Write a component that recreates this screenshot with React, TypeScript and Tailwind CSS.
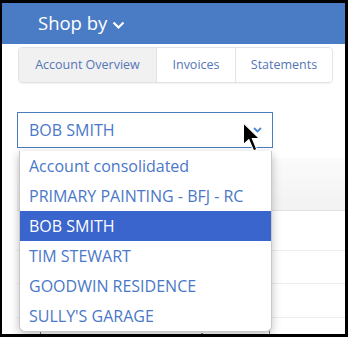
import { useState } from 'react';

const accounts = [
  'Account consolidated',
  'PRIMARY PAINTING - BFJ - RC',
  'BOB SMITH',
  'TIM STEWART',
  'GOODWIN RESIDENCE',
  "SULLY'S GARAGE",
];

const tabs = ['Account Overview', 'Invoices', 'Statements'];

export default function App() {
  const [selected, setSelected] = useState('BOB SMITH');
  const [activeTab, setActiveTab] = useState(0);

  return (
    <div className="w-[348px] h-[337px] bg-black pt-[3px] pl-[2px] pr-[3px] pb-[3px] font-['Open_Sans',sans-serif]">
      <div className="relative w-full h-full bg-white overflow-hidden">
        {/* Header bar */}
        <div className="h-[41px] bg-[#4a7cc6] flex items-center pl-[36px]">
          <span className="text-white text-[18.5px] leading-none">Shop by</span>
          <svg width="13" height="9" viewBox="0 0 13 9" className="ml-[5px] mt-[3px]">
            <path d="M1.5 1.5 L6.5 6.5 L11.5 1.5" fill="none" stroke="white" strokeWidth="2.2" />
          </svg>
        </div>

        {/* Tabs */}
        <div className="mt-[3px] ml-[16px] w-[315px] h-[36px] flex border border-[#e3e3e3] rounded-[4px] overflow-hidden shadow-[0_1px_1px_rgba(0,0,0,0.05)]">
          {tabs.map((t, i) => (
            <button
              key={t}
              onClick={() => setActiveTab(i)}
              className={`h-full flex items-center justify-center text-[12.5px] text-[#5476b6] ${
                i === 0 ? 'w-[137px]' : i === 1 ? 'w-[79px] border-l border-[#e3e3e3]' : 'flex-1 border-l border-[#e3e3e3]'
              } ${i === activeTab ? 'bg-[#f1f1f1]' : 'bg-white'}`}
            >
              {t}
            </button>
          ))}
        </div>

        {/* Account select */}
        <div className="mt-[29px] ml-[15px] w-[256px] h-[36px] border border-[#4a7cc0] flex items-center justify-between pl-[11px] pr-[10px]">
          <span className="text-[16px] text-[#4a78c8]">{selected}</span>
          <svg width="9" height="6" viewBox="0 0 9 6">
            <path d="M1 1 L4.5 4.5 L8 1" fill="none" stroke="#4a86d8" strokeWidth="1.8" />
          </svg>
        </div>

        {/* Content behind dropdown */}
        <div className="mt-[10px] ml-[15px]">
          <div className="h-[53px] bg-gradient-to-b from-[#fbfbfb] to-[#f2f2f2] border-b border-[#e2e2e2]" />
          <div className="h-[40px] border-b border-[#ececec]" />
          <div className="h-[33px] border-b border-[#ececec]" />
          <div className="h-[34px] border-b border-[#ececec]" />
          <div className="mt-[10px] ml-[23px] w-[230px] border border-[#777] px-[4px] text-[14px] leading-[20px] text-[#333]">
            Last payment processed
          </div>
        </div>

        {/* Dropdown menu */}
        <div className="absolute left-[17px] top-[148px] w-[253px] bg-white rounded-b-[6px] border border-t-0 border-[#c8c8c8] shadow-[0_3px_10px_rgba(0,0,0,0.25)] overflow-hidden">
          {accounts.map((a) => (
            <div
              key={a}
              onClick={() => setSelected(a)}
              className={`h-[30px] flex items-center pl-[9px] text-[16px] ${
                a === selected ? 'bg-[#3a65cd] text-white' : 'text-[#4a78c8]'
              }`}
            >
              {a}
            </div>
          ))}
        </div>

        {/* Mouse pointer */}
        <svg
          width="20"
          height="32"
          viewBox="0 0 18 30"
          className="absolute left-[240px] top-[119px]"
        >
          <path
            d="M1 1 L1 21 L6 16.5 L10.5 27 L13.5 25.8 L9.3 15.5 L16 15.5 Z"
            fill="black"
            stroke="white"
            strokeWidth="1"
          />
        </svg>
      </div>
    </div>
  );
}
